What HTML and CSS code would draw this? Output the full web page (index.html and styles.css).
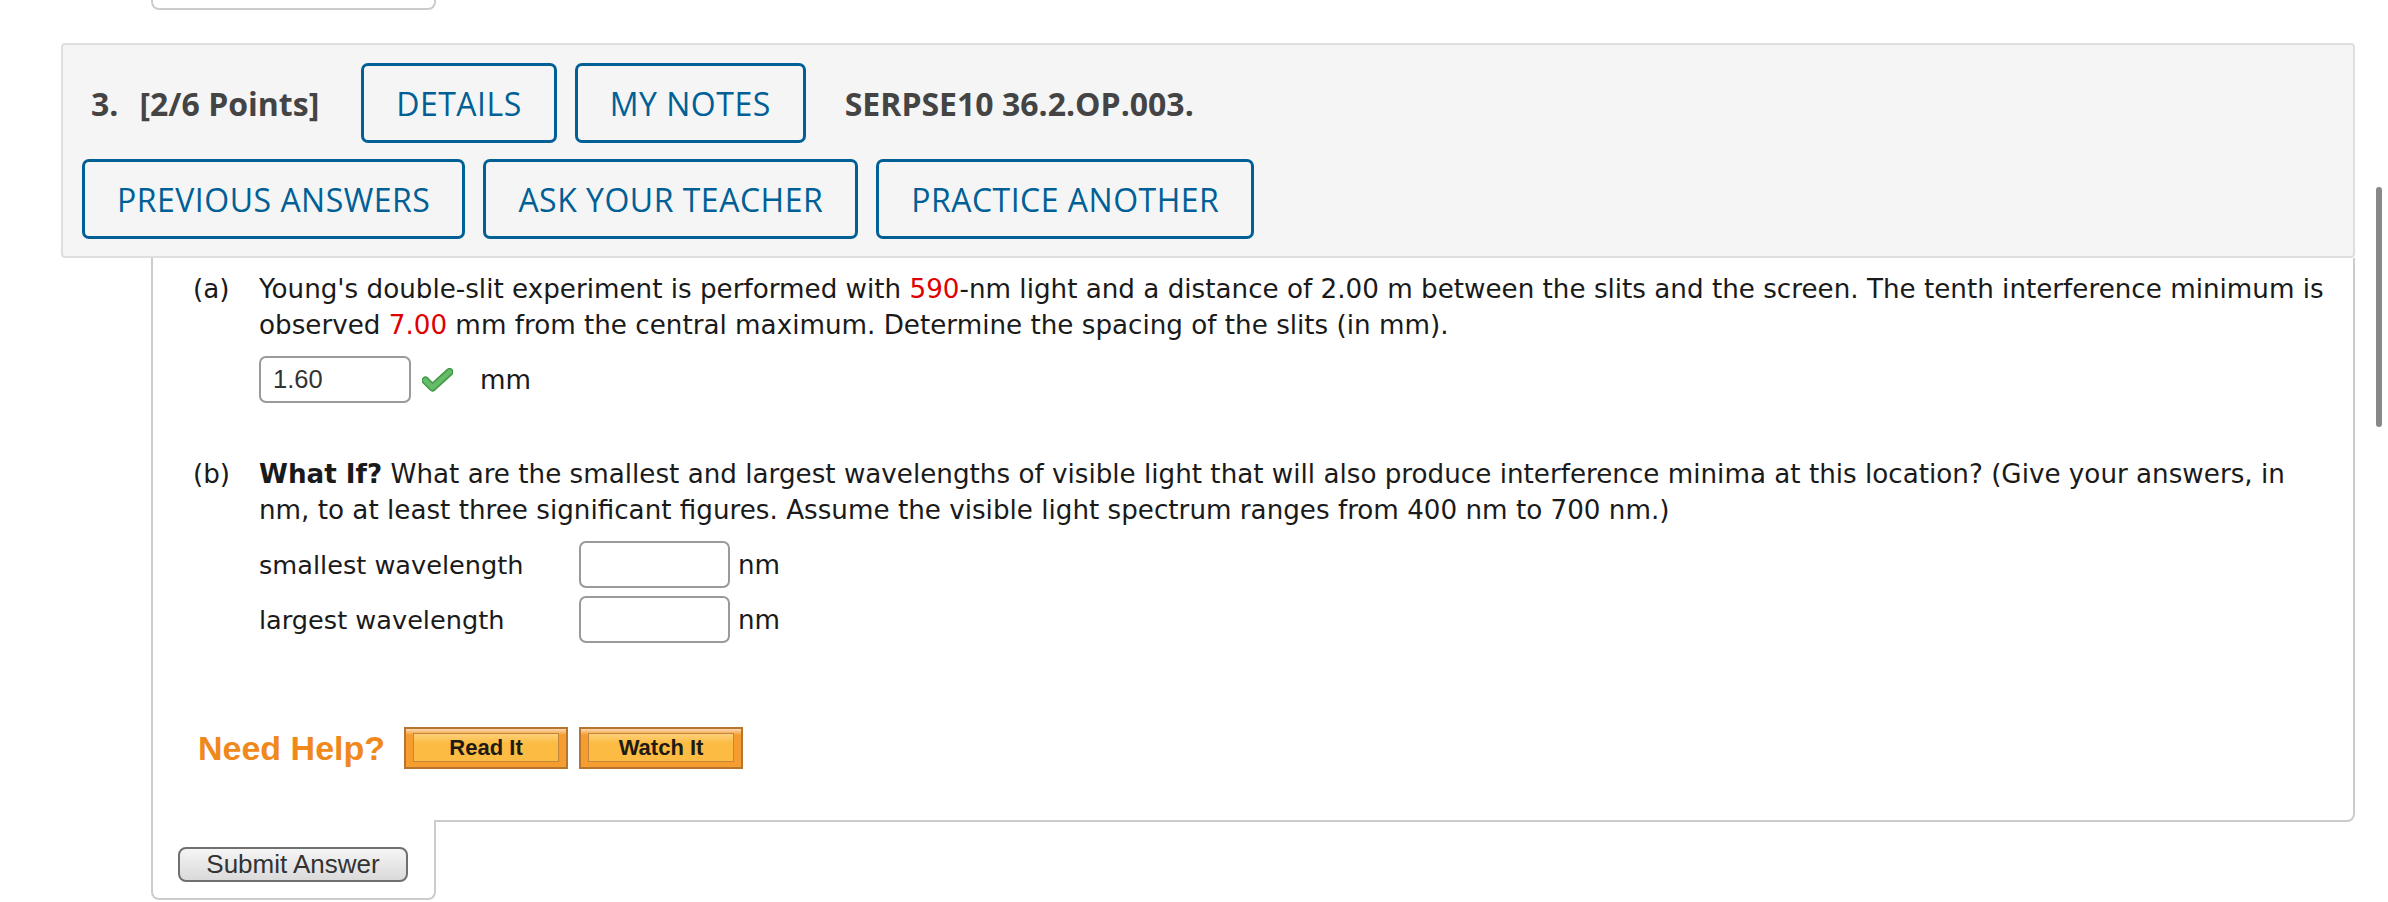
FILE: index.html
```html
<!DOCTYPE html>
<html lang="en">
<head>
<meta charset="utf-8">
<title>Question 3</title>
<link rel="stylesheet" href="styles.css">
</head>
<body>
<div class="prev-tab"></div>
<div class="question">
  <div class="q-header">
    <div class="q-row">
      <span class="q-num">3.</span>
      <span class="q-points">[2/6 Points]</span>
      <a class="q-btn">DETAILS</a>
      <a class="q-btn">MY NOTES</a>
      <span class="q-code">SERPSE10 36.2.OP.003.</span>
    </div>
    <div class="q-row">
      <a class="q-btn">PREVIOUS ANSWERS</a>
      <a class="q-btn">ASK YOUR TEACHER</a>
      <a class="q-btn">PRACTICE ANOTHER</a>
    </div>
  </div>
  <div class="q-body">
    <div class="part">
      <div class="part-label">(a)</div>
      <div class="part-content">
        <p class="part-text">Young's double-slit experiment is performed with <span class="red">590</span>-nm light and a distance of 2.00 m between the slits and the screen. The tenth interference minimum is observed <span class="red">7.00</span> mm from the central maximum. Determine the spacing of the slits (in mm).</p>
        <div class="answer-row">
          <input class="answer-box" type="text" value="1.60">
          <svg class="check" width="31" height="24" viewBox="0 0 31 24">
            <path d="M3.5 12.5 L10.5 19.5 L27.5 4" fill="none" stroke="#3f9a44" stroke-width="8" stroke-linecap="round" stroke-linejoin="round"/>
            <path d="M3.5 12.5 L10.5 19.5 L27.5 4" fill="none" stroke="#66bb6a" stroke-width="5" stroke-linecap="round" stroke-linejoin="round"/>
          </svg>
          <span class="unit-mm">mm</span>
        </div>
      </div>
    </div>
    <div class="part part-b">
      <div class="part-label">(b)</div>
      <div class="part-content">
        <p class="part-text"><b>What If?</b> What are the smallest and largest wavelengths of visible light that will also produce interference minima at this location? (Give your answers, in nm, to at least three significant figures. Assume the visible light spectrum ranges from 400 nm to 700 nm.)</p>
        <div class="wl-table">
          <div class="wl-row">
            <span class="wl-label">smallest wavelength</span>
            <input class="answer-box" type="text" value="">
            <span class="unit-nm">nm</span>
          </div>
          <div class="wl-row">
            <span class="wl-label">largest wavelength</span>
            <input class="answer-box" type="text" value="">
            <span class="unit-nm">nm</span>
          </div>
        </div>
      </div>
    </div>
    <div class="help-row">
      <span class="need-help">Need Help?</span>
      <span class="help-btn"><span class="help-inner">Read It</span></span>
      <span class="help-btn"><span class="help-inner">Watch It</span></span>
    </div>
  </div>
  <div class="submit-tab">
    <button class="submit-btn" type="button">Submit Answer</button>
  </div>
</div>
<div class="scrollbar"></div>
</body>
</html>
```

FILE: styles.css
```css
* { box-sizing: border-box; }

html, body {
  margin: 0;
  padding: 0;
  background: #ffffff;
}

body {
  font-family: "DejaVu Sans", Verdana, sans-serif;
  color: #1a1a1a;
  overflow: hidden;
}

.prev-tab {
  margin-left: 151px;
  width: 285px;
  height: 10px;
  border: 2px solid #cccccc;
  border-top: none;
  border-radius: 0 0 8px 8px;
}

.question {
  margin: 33px 0 0 61px;
  width: 2294px;
}

.q-header {
  background: #f5f5f5;
  border: 2px solid #dedede;
  border-radius: 4px;
  padding: 18px 19px 17px;
  display: flex;
  flex-direction: column;
  gap: 16px;
}

.q-row {
  display: flex;
  align-items: center;
  gap: 18px;
  height: 80px;
}

.q-num,
.q-points,
.q-code {
  font-family: "Open Sans", sans-serif;
  font-weight: 700;
  font-size: 32px;
  color: #444444;
}

.q-num { margin-left: 9px; margin-right: 3px; }
.q-points { margin-right: 24px; }
.q-code { margin-left: 21px; }

.q-btn {
  height: 80px;
  padding: 0 32px;
  border: 3px solid #006096;
  border-radius: 7px;
  color: #006096;
  font-family: "Open Sans", sans-serif;
  font-size: 32px;
  font-weight: 500;
  letter-spacing: 0.5px;
  display: flex;
  align-items: center;
  white-space: nowrap;
}

.q-body {
  margin-left: 90px;
  border: 2px solid #cccccc;
  border-top: none;
  border-radius: 0 0 8px 0;
  padding: 13px 18px 51px 40px;
  font-size: 26.2px;
  line-height: 36px;
}

.part {
  display: grid;
  grid-template-columns: 66px 1fr;
}

.part-b { margin-top: 53px; }

.part-text { margin: 0; }

.red { color: #e00000; }

.answer-row {
  margin-top: 13px;
  display: flex;
  align-items: center;
}

.answer-box {
  width: 152px;
  height: 47px;
  border: 2px solid #9a9a9a;
  border-radius: 7px;
  padding: 0 12px;
  font-family: "Liberation Sans", Arial, sans-serif;
  font-size: 25.5px;
  color: #333333;
  background: #ffffff;
  margin: 0;
  outline: none;
}

.check { margin-left: 11px; display: block; }
.unit-mm { margin-left: 27px; }

.wl-table {
  margin-top: 13px;
  display: flex;
  flex-direction: column;
  gap: 8px;
}

.wl-row {
  display: flex;
  align-items: center;
}

.wl-label { width: 320px; font-size: 25.6px; }
.wl-row .answer-box { width: 151px; }
.unit-nm { margin-left: 8px; }

.help-row {
  margin-top: 84px;
  display: flex;
  align-items: center;
  gap: 11px;
}

.need-help {
  font-family: "Liberation Sans", Arial, sans-serif;
  font-weight: 700;
  font-size: 34px;
  color: #f0891c;
  margin-left: 5px;
  margin-right: 8px;
}

.help-btn {
  display: flex;
  width: 164px;
  height: 42px;
  border: 2px solid #b8752f;
  background: linear-gradient(#fcd9b4 0, #f59d2f 6px, #f59d2f);
  padding: 4px 7px 5px;
}

.help-inner {
  flex: 1;
  display: flex;
  align-items: center;
  justify-content: center;
  border: 1px solid #c3863a;
  background: linear-gradient(#fdd07a, #fcbb42 35%, #fcbb42);
  font-family: "Liberation Sans", Arial, sans-serif;
  font-weight: 700;
  font-size: 22px;
  line-height: 1;
  color: #1e1a14;
}

.submit-tab {
  margin-left: 90px;
  margin-top: -2px;
  width: 285px;
  background: #ffffff;
  border: 2px solid #cccccc;
  border-top: none;
  border-radius: 0 0 8px 8px;
  padding: 27px 0 16px 25px;
}

.submit-btn {
  display: block;
  width: 230px;
  height: 35px;
  margin: 0;
  padding: 0;
  border: 2px solid #707070;
  border-radius: 8px;
  background: linear-gradient(#f5f5f5, #dadada);
  font-family: "Liberation Sans", Arial, sans-serif;
  font-size: 26px;
  line-height: 31px;
  color: #333333;
}

.scrollbar {
  position: fixed;
  top: 187px;
  right: 6px;
  width: 6px;
  height: 240px;
  border-radius: 3px;
  background: #888888;
}
```
